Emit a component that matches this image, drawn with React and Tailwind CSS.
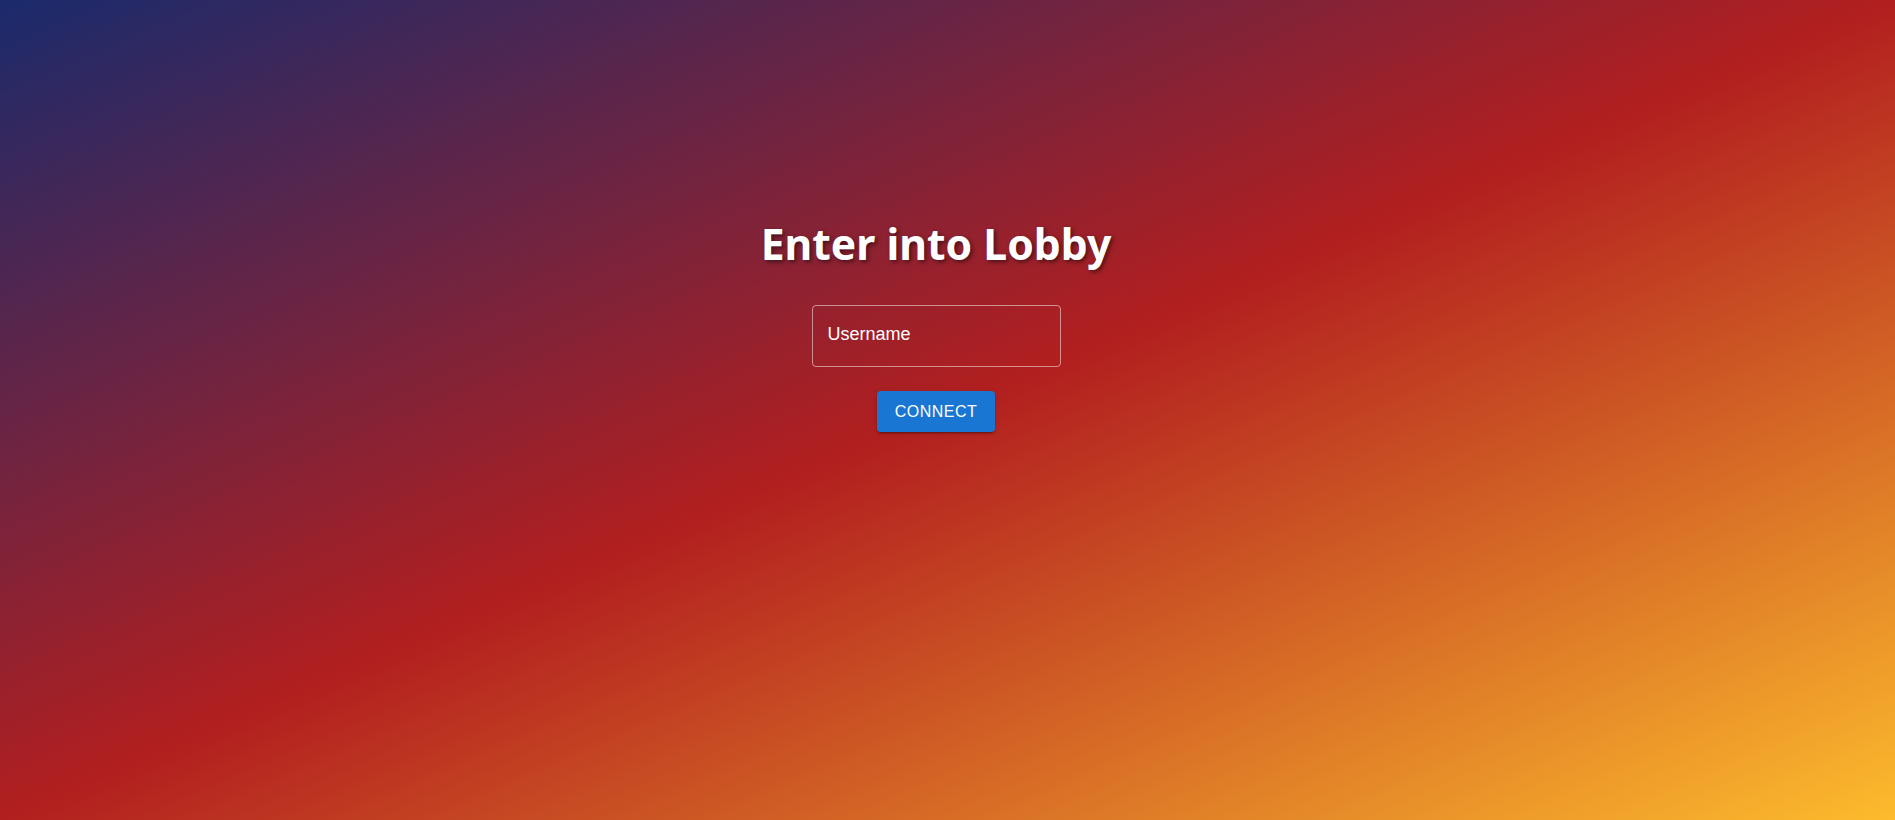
export default function App() {
  return (
    <div className="min-h-screen w-full bg-[linear-gradient(to_bottom_right,#1a2a6c,#b21f1f,#fdbb2d)]">
      <div className="flex flex-col items-center pt-[219px] pr-[23px]">
        <h1 className="font-['Noto_Sans',sans-serif] text-[42.7px] leading-[50px] font-bold text-white [text-shadow:2px_2px_4px_rgba(0,0,0,0.5)]">
          Enter into Lobby
        </h1>

        <div className="mt-[36px] flex h-[62px] w-[249px] items-center rounded-[4px] border border-white/50 pb-[3px] pl-[15px]">
          <span className="font-['Liberation_Sans',sans-serif] text-[18px] text-white">Username</span>
        </div>

        <button className="mt-[24px] flex h-[41px] w-[118px] items-center justify-center rounded-[4px] bg-[#1976d2] font-['Liberation_Sans',sans-serif] text-[16px] font-normal tracking-[0.02857em] text-white shadow-[0px_3px_1px_-2px_rgba(0,0,0,0.2),0px_2px_2px_0px_rgba(0,0,0,0.14),0px_1px_5px_0px_rgba(0,0,0,0.12)]">
          CONNECT
        </button>
      </div>
    </div>
  );
}
